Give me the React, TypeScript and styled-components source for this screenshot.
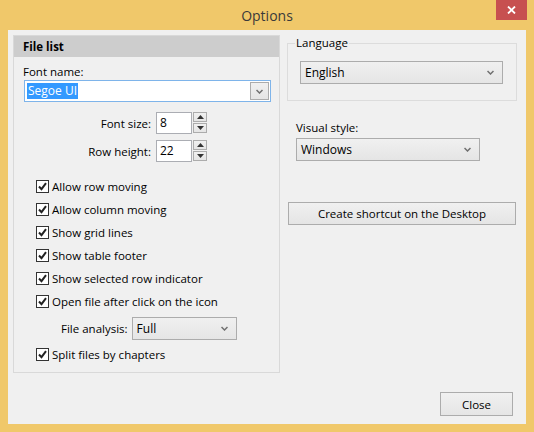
import styled, { createGlobalStyle } from "styled-components";

const GlobalStyle = createGlobalStyle`
  html, body {
    margin: 0;
    padding: 0;
  }
  body {
    font-family: "Segoe UI", "Open Sans", "Noto Sans", sans-serif;
    font-size: 11.5px;
    color: #000;
  }
`;

const Window = styled.div`
  width: 534px;
  height: 432px;
  background: #f0c86a;
  display: flex;
  flex-direction: column;
  box-sizing: border-box;
`;

const TitleBar = styled.div`
  height: 30px;
  display: grid;
  grid-template-columns: 1fr auto 1fr;
  align-items: start;
  flex-shrink: 0;
`;

const Title = styled.div`
  grid-column: 2;
  font-size: 14px;
  line-height: 31px;
  color: #3a3a3a;
`;

const CloseX = styled.div`
  grid-column: 3;
  justify-self: end;
  width: 31px;
  height: 20px;
  margin-right: 7px;
  background: #c75050;
  display: flex;
  align-items: center;
  justify-content: center;
`;

const Content = styled.div`
  flex: 1;
  margin: 0 8px 8px 8px;
  background: #f0f0f0;
  padding: 5px 9px 8px 5px;
  display: flex;
  flex-direction: column;
`;

const MainRow = styled.div`
  display: flex;
  gap: 7px;
  align-items: flex-start;
`;

const Panel = styled.div`
  width: 267px;
  box-sizing: border-box;
  border: 1px solid #d9d9d9;
  padding-bottom: 6px;
`;

const PanelHeader = styled.div`
  height: 21px;
  background: #cdcdcd;
  font-weight: bold;
  line-height: 21px;
  padding-left: 9px;
`;

const PanelBody = styled.div`
  padding-left: 9px;
  padding-right: 9px;
`;

const Label = styled.div<{ $top?: number }>`
  line-height: 16px;
  margin-top: ${(p) => p.$top ?? 0}px;
  white-space: nowrap;
`;

const EditCombo = styled.div`
  margin-left: 1px;
  width: 247px;
  height: 22px;
  box-sizing: border-box;
  border: 1px solid #7eb4ea;
  background: #fff;
  display: flex;
  align-items: center;
  padding: 0 1px 0 2px;
`;

const Selected = styled.span`
  background: #3399ff;
  color: #fff;
  line-height: 16px;
  padding: 0 1px;
  font-size: 12px;
`;

const DropBtn = styled.div`
  margin-left: auto;
  width: 19px;
  height: 18px;
  box-sizing: border-box;
  border: 1px solid #acacac;
  background: linear-gradient(#f0f0f0, #e5e5e5);
  display: flex;
  align-items: center;
  justify-content: center;
`;

const SpinGrid = styled.div`
  display: grid;
  grid-template-columns: 128px auto;
  column-gap: 5px;
  row-gap: 6px;
  align-items: center;
  margin-top: 10px;
`;

const SpinLabel = styled.div`
  text-align: right;
  white-space: nowrap;
`;

const SpinWrap = styled.div`
  display: flex;
  gap: 1px;
`;

const NumBox = styled.div`
  width: 36px;
  height: 22px;
  box-sizing: border-box;
  border: 1px solid #abadb3;
  background: #fff;
  padding-left: 3px;
  line-height: 19px;
  font-size: 12px;
`;

const SpinBtns = styled.div`
  display: flex;
  flex-direction: column;
  gap: 1px;
`;

const SpinBtn = styled.div`
  width: 14px;
  height: 10px;
  box-sizing: border-box;
  border: 1px solid #acacac;
  background: linear-gradient(#f0f0f0, #e5e5e5);
  display: flex;
  align-items: center;
  justify-content: center;
`;

const CheckList = styled.div`
  margin-top: 13px;
  padding-left: 13px;
`;

const CheckRow = styled.div`
  height: 23px;
  display: flex;
  align-items: center;
  gap: 3px;
  white-space: nowrap;
`;

const Box = styled.div`
  width: 13px;
  height: 13px;
  box-sizing: border-box;
  border: 1px solid #333;
  background: #fff;
  display: flex;
  align-items: center;
  justify-content: center;
`;

const SubRow = styled.div`
  display: flex;
  align-items: center;
  gap: 4px;
  margin: 4px 0 3px 25px;
`;

const Combo = styled.div<{ $w: number; $h?: number }>`
  width: ${(p) => p.$w}px;
  height: ${(p) => p.$h ?? 23}px;
  box-sizing: border-box;
  border: 1px solid #acacac;
  background: linear-gradient(#f0f0f0, #e5e5e5);
  display: flex;
  align-items: center;
  justify-content: space-between;
  padding: 0 8px 0 4px;
  font-size: 12px;
`;

const RightCol = styled.div`
  width: 230px;
  display: flex;
  flex-direction: column;
`;

const Group = styled.fieldset`
  margin: 0;
  padding: 0 0 16px 12px;
  border: 1px solid #dcdcdc;
`;

const Legend = styled.legend`
  margin-left: -5px;
  padding: 0 1px;
  line-height: 16px;
`;

const GroupCombo = styled(Combo)`
  margin-top: 10px;
`;

const StyleBlock = styled.div`
  margin-top: 19px;
  padding-left: 9px;
  display: flex;
  flex-direction: column;
  gap: 2px;
`;

const Button = styled.button<{ $w: number; $h?: number }>`
  width: ${(p) => p.$w}px;
  height: ${(p) => p.$h ?? 23}px;
  box-sizing: border-box;
  border: 1px solid #acacac;
  background: linear-gradient(#f0f0f0, #e5e5e5);
  font-family: inherit;
  font-size: 11.5px;
  color: #000;
  padding: 0;
`;

const ShortcutButton = styled(Button)`
  margin-top: 41px;
  margin-left: 1px;
`;

const Footer = styled.div`
  margin-top: auto;
  display: flex;
  justify-content: flex-end;
  padding-right: 4px;
`;

function Chevron() {
  return (
    <svg width="7" height="5" viewBox="0 0 7 5">
      <polyline points="0.5,1 3.5,4 6.5,1" fill="none" stroke="#707070" strokeWidth="1.5" />
    </svg>
  );
}

function Arrow({ up }: { up?: boolean }) {
  return (
    <svg width="7" height="4" viewBox="0 0 7 4">
      <polygon points={up ? "0,4 7,4 3.5,0" : "0,0 7,0 3.5,4"} fill="#333" />
    </svg>
  );
}

function Check() {
  return (
    <svg width="9" height="9" viewBox="0 0 9 9">
      <polyline points="1,4.5 3.5,7.2 8,1.2" fill="none" stroke="#222" strokeWidth="2" />
    </svg>
  );
}

const checks = [
  "Allow row moving",
  "Allow column moving",
  "Show grid lines",
  "Show table footer",
  "Show selected row indicator",
  "Open file after click on the icon",
];

function CheckItem({ label }: { label: string }) {
  return (
    <CheckRow>
      <Box>
        <Check />
      </Box>
      {label}
    </CheckRow>
  );
}

export default function App() {
  return (
    <>
      <GlobalStyle />
      <Window>
        <TitleBar>
          <Title>Options</Title>
          <CloseX>
            <svg width="9" height="8" viewBox="0 0 9 8">
              <path d="M1 0.5 L8 7.5 M8 0.5 L1 7.5" stroke="#fff" strokeWidth="1.8" />
            </svg>
          </CloseX>
        </TitleBar>
        <Content>
          <MainRow>
            <Panel>
              <PanelHeader>File list</PanelHeader>
              <PanelBody>
                <Label $top={7}>Font name:</Label>
                <EditCombo>
                  <Selected>Segoe UI</Selected>
                  <DropBtn>
                    <Chevron />
                  </DropBtn>
                </EditCombo>
                <SpinGrid>
                  <SpinLabel>Font size:</SpinLabel>
                  <SpinWrap>
                    <NumBox>8</NumBox>
                    <SpinBtns>
                      <SpinBtn>
                        <Arrow up />
                      </SpinBtn>
                      <SpinBtn>
                        <Arrow />
                      </SpinBtn>
                    </SpinBtns>
                  </SpinWrap>
                  <SpinLabel>Row height:</SpinLabel>
                  <SpinWrap>
                    <NumBox>22</NumBox>
                    <SpinBtns>
                      <SpinBtn>
                        <Arrow up />
                      </SpinBtn>
                      <SpinBtn>
                        <Arrow />
                      </SpinBtn>
                    </SpinBtns>
                  </SpinWrap>
                </SpinGrid>
                <CheckList>
                  {checks.map((c) => (
                    <CheckItem key={c} label={c} />
                  ))}
                  <SubRow>
                    <span>File analysis:</span>
                    <Combo $w={105}>
                      Full
                      <Chevron />
                    </Combo>
                  </SubRow>
                  <CheckItem label="Split files by chapters" />
                </CheckList>
              </PanelBody>
            </Panel>
            <RightCol>
              <Group>
                <Legend>Language</Legend>
                <GroupCombo $w={203} $h={23}>
                  English
                  <Chevron />
                </GroupCombo>
              </Group>
              <StyleBlock>
                <Label>Visual style:</Label>
                <Combo $w={184}>
                  Windows
                  <Chevron />
                </Combo>
              </StyleBlock>
              <ShortcutButton $w={228}>Create shortcut on the Desktop</ShortcutButton>
            </RightCol>
          </MainRow>
          <Footer>
            <Button $w={73} $h={24}>
              Close
            </Button>
          </Footer>
        </Content>
      </Window>
    </>
  );
}
